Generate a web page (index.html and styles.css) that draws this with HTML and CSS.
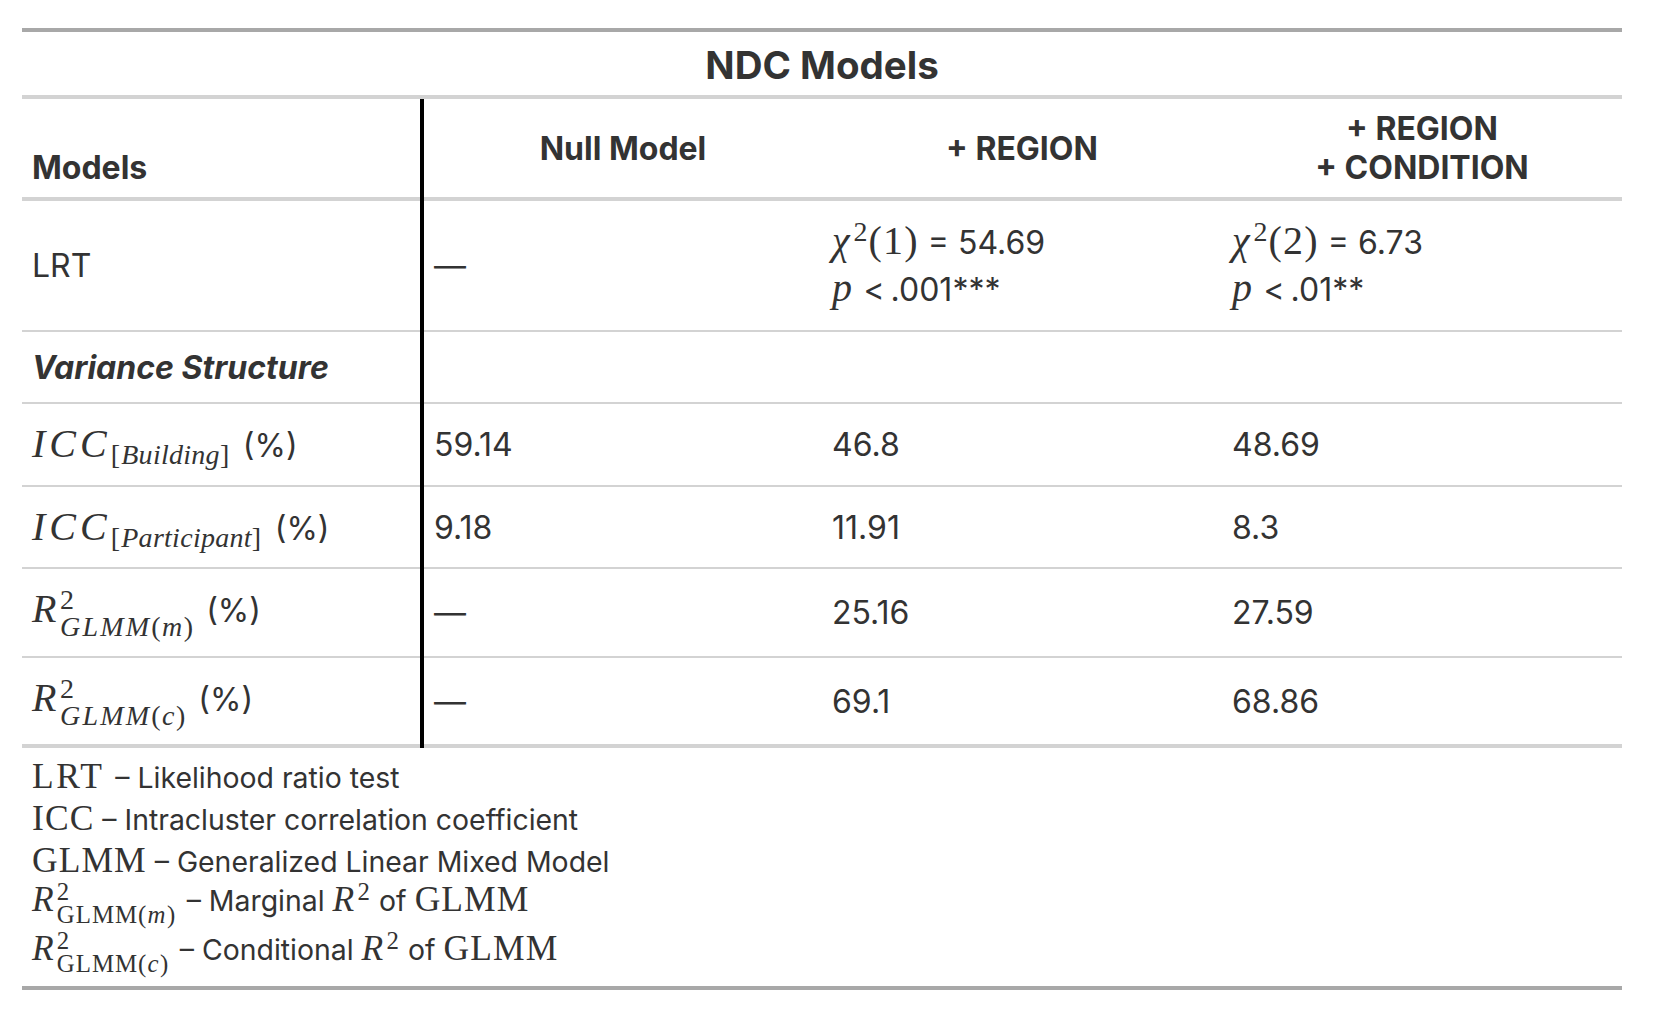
FILE: index.html
```html
<!DOCTYPE html>
<html lang="en">
<head>
<meta charset="utf-8">
<title>NDC Models</title>
<link rel="stylesheet" href="styles.css">
</head>
<body>
<div class="wrap">
<table class="gt">
  <colgroup><col class="c1"><col class="c2"><col class="c3"><col class="c4"></colgroup>
  <thead>
    <tr class="r-title"><th class="title" colspan="4">NDC Models</th></tr>
    <tr class="r-head">
      <th class="stub stubhead">Models</th>
      <th class="lab">Null Model</th>
      <th class="lab">+ REGION</th>
      <th class="lab">+ REGION<br>+ CONDITION</th>
    </tr>
  </thead>
  <tbody>
    <tr class="r-lrt">
      <td class="stub">LRT</td>
      <td>—</td>
      <td class="lrt">
        <div><span class="m"><span class="it">χ</span><span class="sup">2</span>(1)</span> = 54.69</div>
        <div><span class="m"><span class="it">p</span></span> <span class="lt">&lt;</span> .001***</div>
      </td>
      <td class="lrt">
        <div><span class="m"><span class="it">χ</span><span class="sup">2</span>(2)</span> = 6.73</div>
        <div><span class="m"><span class="it">p</span></span> <span class="lt">&lt;</span> .01**</div>
      </td>
    </tr>
    <tr class="r-var">
      <td class="stub group">Variance Structure</td>
      <td></td><td></td><td></td>
    </tr>
    <tr class="r-iccb">
      <td class="stub lbl-sub"><span class="m"><span class="it wide">ICC</span><span class="sub">[<span class="it">Building</span>]</span></span> (%)</td>
      <td>59.14</td><td>46.8</td><td>48.69</td>
    </tr>
    <tr class="r-iccp">
      <td class="stub lbl-sub"><span class="m"><span class="it wide">ICC</span><span class="sub">[<span class="it">Participant</span>]</span></span> (%)</td>
      <td>9.18</td><td>11.91</td><td>8.3</td>
    </tr>
    <tr class="r-r2m">
      <td class="stub lbl-ss"><span class="m"><span class="it">R</span><span class="ss"><span>2</span><span class="sb"><span class="it cap">GLMM</span>(<span class="it">m</span>)</span></span></span> (%)</td>
      <td>—</td><td>25.16</td><td>27.59</td>
    </tr>
    <tr class="r-r2c">
      <td class="stub lbl-ss last"><span class="m"><span class="it">R</span><span class="ss"><span>2</span><span class="sb"><span class="it cap">GLMM</span>(<span class="it">c</span>)</span></span></span> (%)</td>
      <td>—</td><td>69.1</td><td>68.86</td>
    </tr>
  </tbody>
  <tfoot>
    <tr class="r-notes">
      <td class="notes" colspan="4">
        <div class="fn"><span class="m wide">LRT</span> – Likelihood ratio test</div>
        <div class="fn"><span class="m">ICC</span> – Intracluster correlation coefficient</div>
        <div class="fn"><span class="m">GLMM</span> – Generalized Linear Mixed Model</div>
        <div class="fn fn4"><span class="m"><span class="it">R</span><span class="ss"><span>2</span><span class="sb"><span class="rm">GLMM</span>(<span class="it">m</span>)</span></span></span> – Marginal <span class="m"><span class="it">R</span><span class="sup">2</span></span> of <span class="m">GLMM</span></div>
        <div class="fn fn5"><span class="m"><span class="it">R</span><span class="ss"><span>2</span><span class="sb"><span class="rm">GLMM</span>(<span class="it">c</span>)</span></span></span> – Conditional <span class="m"><span class="it">R</span><span class="sup">2</span></span> of <span class="m">GLMM</span></div>
      </td>
    </tr>
  </tfoot>
</table>
</div>
</body>
</html>
```

FILE: styles.css
```css
html, body {
  margin: 0;
  background: #ffffff;
}

body {
  font-family: Inter, "Noto Sans", "Liberation Sans", sans-serif;
  color: #333333;
}

.wrap {
  padding: 28px 0 0 22px;
}

.gt {
  border-collapse: separate;
  border-spacing: 0;
  table-layout: fixed;
  width: 1600px;
  font-size: 32px;
  line-height: normal;
}

.c1 { width: 402px; }
.c2 { width: 398px; }
.c3 { width: 400px; }
.c4 { width: 400px; }

.gt th,
.gt td {
  padding: 0 10px;
  text-align: left;
  vertical-align: middle;
  font-weight: 400;
  border-bottom: 2px solid #d3d3d3;
  white-space: nowrap;
}

.gt th {
  font-weight: 700;
}

/* title */
.r-title { height: 71px; }

.gt .title {
  text-align: center;
  font-size: 38.5px;
  font-weight: 700;
  border-top: 4px solid #a8a8a8;
  border-bottom: 4px solid #d3d3d3;
  padding-top: 2px;
}

/* column labels */
.r-head { height: 102px; }

.gt .r-head th {
  border-bottom-width: 4px;
}

.gt .lab {
  text-align: center;
}

/* stub column with the black divider */
.gt .stub {
  border-bottom: none;
  border-right: 4px solid #000000;
  padding-bottom: 2px;
  background-image: linear-gradient(#d3d3d3, #d3d3d3);
  background-repeat: no-repeat;
  background-position: left bottom;
  background-size: 100% 2px;
  background-origin: border-box;
  background-clip: border-box;
}

.gt .r-head .stubhead {
  border-bottom: none;
  vertical-align: bottom;
  padding-bottom: 14px;
  background-size: 100% 4px;
}

.gt .group {
  font-weight: 700;
  font-style: italic;
}

/* body rows */
.r-lrt  { height: 131px; }
.r-var  { height: 72px; }
.r-iccb { height: 83px; }
.r-iccp { height: 82px; }
.r-r2m  { height: 89px; }
.r-r2c  { height: 90px; }

.gt .r-r2c td {
  border-bottom-width: 4px;
}

.gt .lbl-sub {
  padding-bottom: 0;
}

.gt .lbl-ss {
  padding-bottom: 6px;
}

.gt .r-r2c .lbl-ss {
  border-bottom: none;
  padding-bottom: 8px;
  background-size: 100% 4px;
}

.lrt {
  line-height: 47px;
}

.lt {
  margin-right: -3px;
}

/* math */
.m {
  font-family: "Liberation Serif", "DejaVu Serif", serif;
  font-size: 1.25em;
  font-style: normal;
  line-height: 0;
  letter-spacing: 0.03em;
}

.it {
  font-style: italic;
  letter-spacing: 0.06em;
}

.it.wide {
  letter-spacing: 0.1em;
}

.m.wide {
  letter-spacing: 0.07em;
  margin-right: 3px;
}

.sub .it {
  letter-spacing: 0.01em;
}

.sb .cap {
  letter-spacing: 0.08em;
}

.sb .rm {
  letter-spacing: 0.04em;
}

.sup {
  font-size: 0.7em;
  line-height: 0;
  vertical-align: 0.45em;
  margin-left: 0.05em;
}

.sub {
  font-size: 0.7em;
  line-height: 0;
  vertical-align: -0.26em;
  margin-right: 0.12em;
}

.ss {
  display: inline-flex;
  flex-direction: column;
  align-items: flex-start;
  font-size: 0.7em;
  line-height: 0;
  vertical-align: 0.45em;
  margin-left: 0.04em;
  margin-right: 0.1em;
}

.ss > span {
  display: block;
  line-height: 0;
}

.ss > .sb {
  margin-top: 0.95em;
}

/* footnotes */
.r-notes { height: 242px; }

.gt .notes {
  vertical-align: top;
  padding: 9px 10px 0;
  font-size: 28.4px;
  border-bottom: 4px solid #a8a8a8;
}

.fn {
  line-height: 42px;
}

.fn4 {
  margin-top: -3px;
}

.fn5 {
  padding-top: 7px;
}
```
